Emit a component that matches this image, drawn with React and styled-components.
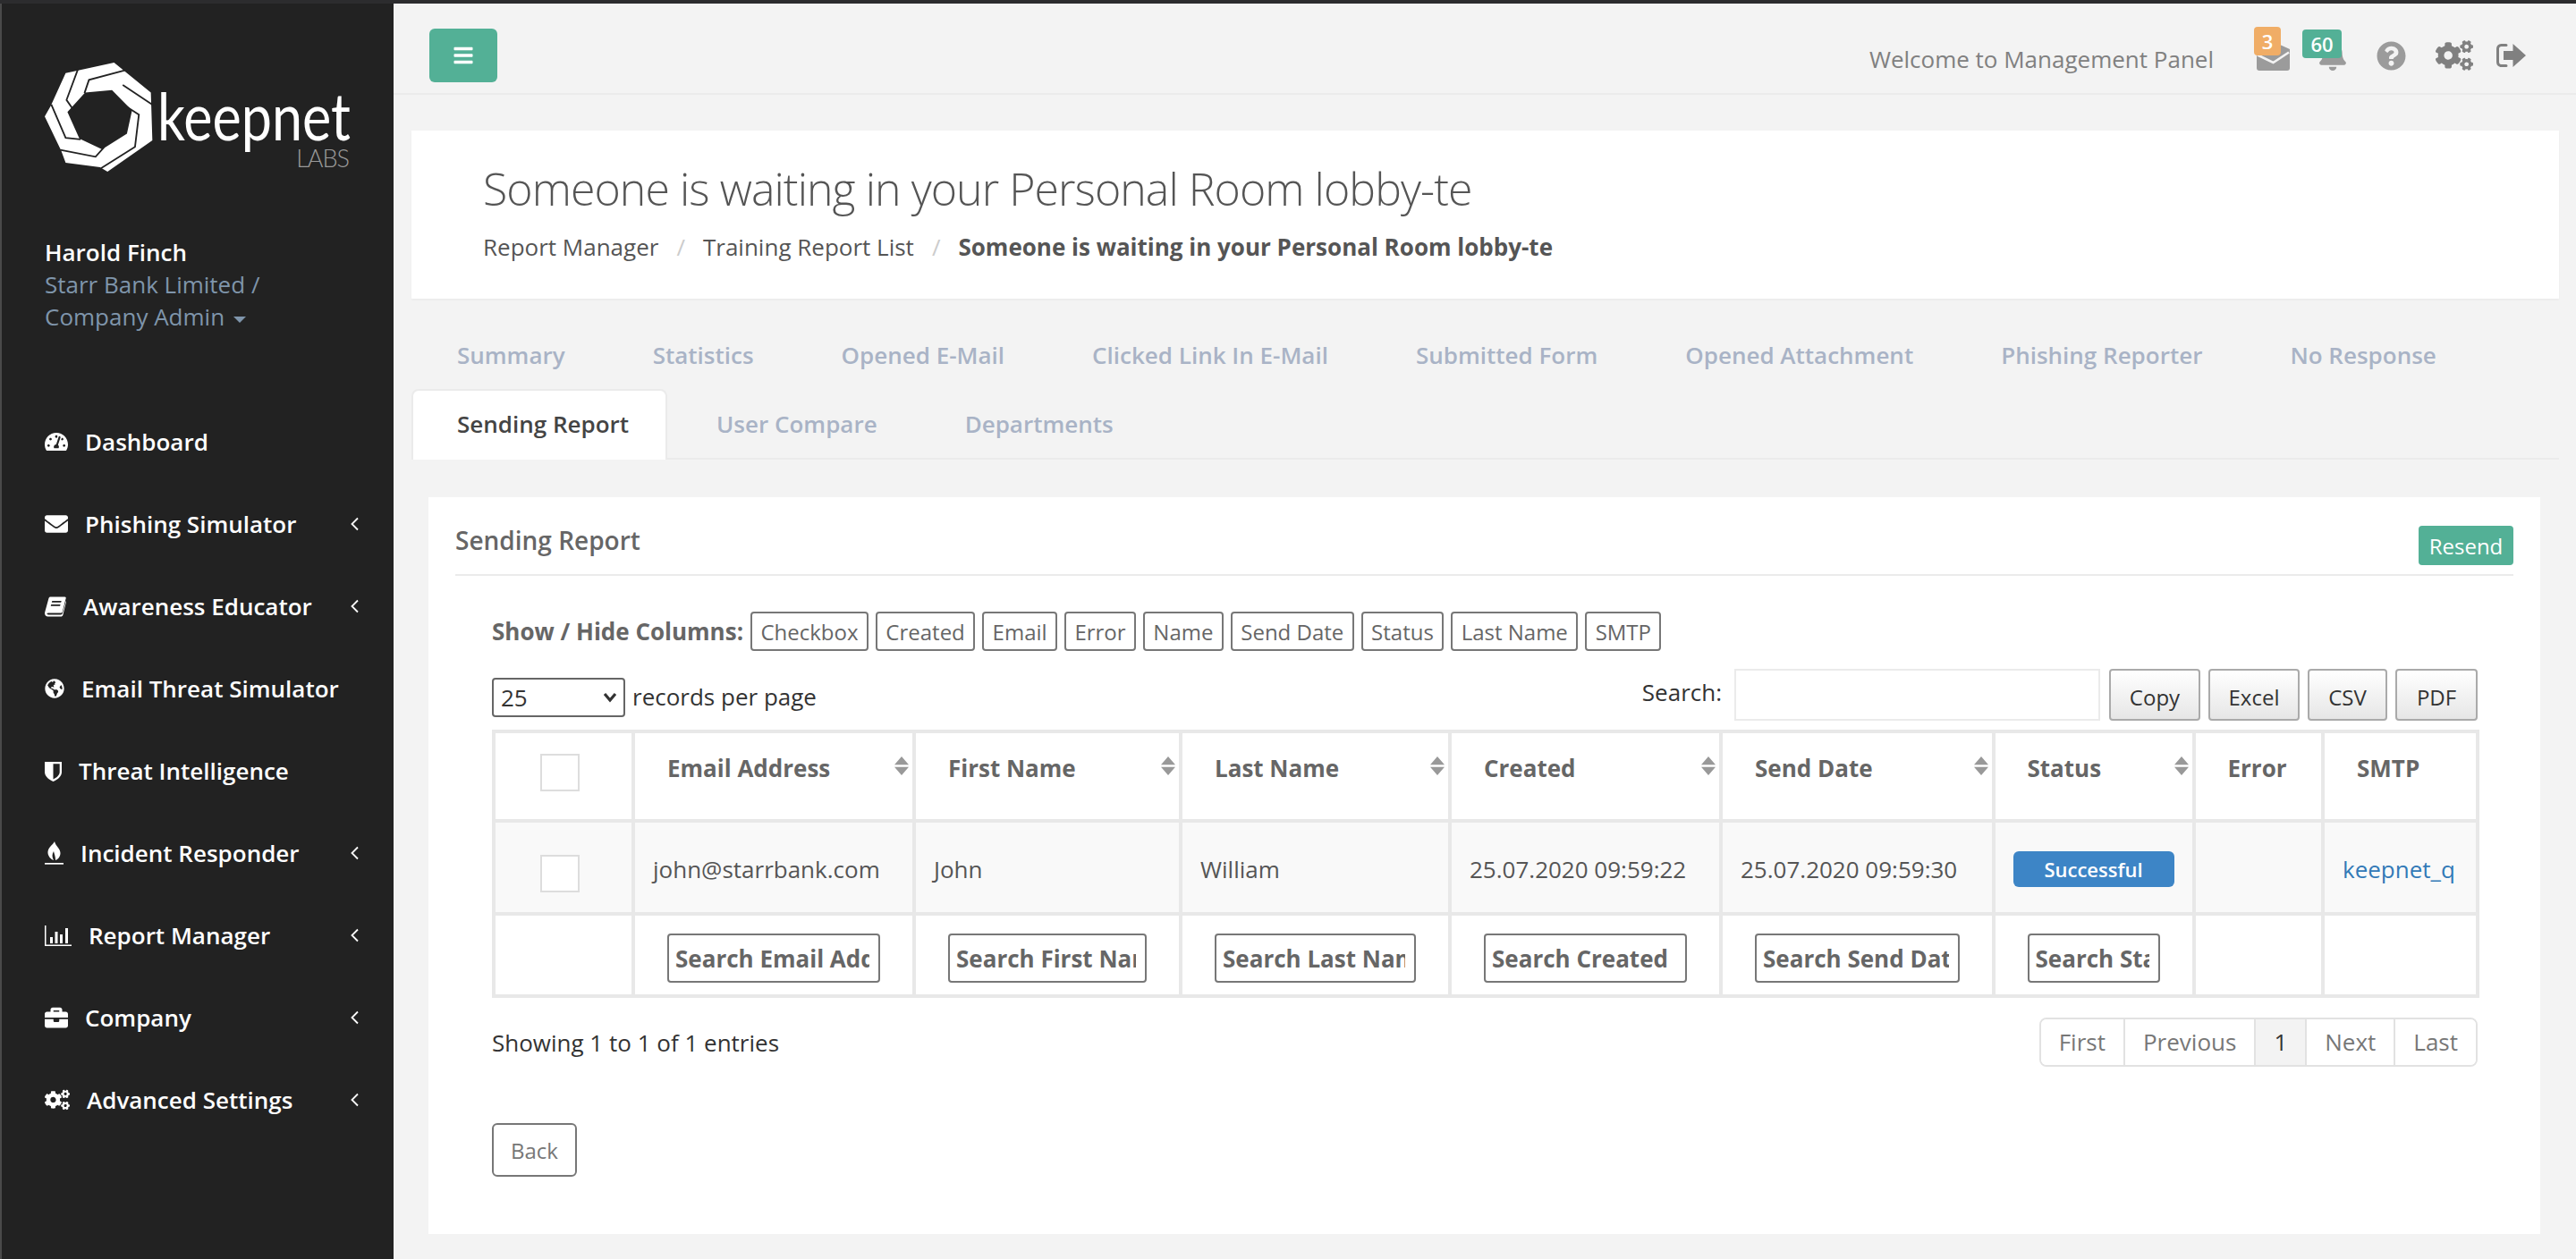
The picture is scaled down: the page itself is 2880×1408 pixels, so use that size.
import React from 'react';
import styled, { createGlobalStyle } from 'styled-components';
import {
  FaTachometerAlt, FaEnvelope, FaGlobeAmericas, FaBriefcase, FaCogs, FaBell, FaQuestionCircle, FaBars,
} from 'react-icons/fa';

const Global = createGlobalStyle`
  html, body { margin: 0; padding: 0; height: 1408px; overflow: hidden; background: #f3f3f3; }
  body { font-family: "Open Sans", "Liberation Sans", sans-serif; font-size: 26px; color: #333; }
  * { box-sizing: border-box; }
`;

const Page = styled.div`
  display: flex;
  height: 1408px;
  border-top: 4px solid #2c2c2e;
`;

const Sidebar = styled.aside`
  width: 440px;
  flex: none;
  background: #222222;
  border-left: 2px solid #4a4a4a;
  padding-top: 66px;
  color: #fff;
`;

const LogoRow = styled.div`
  display: flex;
  padding-left: 48px;
  height: 122px;
`;

const LogoMark = styled.svg`
  width: 122px;
  height: 122px;
  flex: none;
`;

const WordMark = styled.div`
  position: relative;
  width: 214px;
  margin-left: 6px;
`;

const Keepnet = styled.span`
  position: absolute;
  left: -2px;
  top: 28px;
  font-family: Lato, sans-serif;
  font-weight: 400;
  font-size: 74px;
  line-height: 62px;
  color: #fff;
  transform: scaleX(0.825);
  transform-origin: left top;
  white-space: nowrap;
`;

const Labs = styled.span`
  position: absolute;
  right: 2px;
  top: 97px;
  font-family: Lato, sans-serif;
  font-weight: 300;
  font-size: 27px;
  line-height: 20px;
  letter-spacing: -1px;
  color: #9a9a9a;
`;

const UserBlock = styled.div`
  margin-top: 72px;
  padding-left: 48px;
  line-height: 36px;
`;

const UserName = styled.div`
  font-weight: 600;
  color: #fff;
`;

const UserRole = styled.div`
  color: #7f95ab;
  width: 300px;
`;

const Caret = styled.span`
  display: inline-block;
  margin-left: 10px;
  vertical-align: middle;
  border-left: 7px solid transparent;
  border-right: 7px solid transparent;
  border-top: 7px solid #7f95ab;
`;

const Nav = styled.nav`
  margin-top: 76px;
`;

const NavItem = styled.div`
  display: flex;
  align-items: center;
  height: 92px;
  padding: 0 38px 0 48px;
  font-weight: 600;
  color: #fff;
`;

const NavIcon = styled.span`
  display: block;
  flex: none;
  width: ${(p) => p.$w}px;
  margin-right: 19px;
  svg { display: block; width: 100%; height: auto; fill: currentColor; }
`;

const Chevron = styled.svg`
  width: 11px;
  height: 16px;
  margin-left: auto;
`;

const Main = styled.main`
  flex: 1;
  min-width: 0;
`;

const TopBar = styled.header`
  display: flex;
  align-items: center;
  height: 102px;
  padding: 0 56px 0 40px;
  border-bottom: 2px solid #ebebeb;
`;

const MenuButton = styled.button`
  display: flex;
  align-items: center;
  justify-content: center;
  width: 76px;
  height: 60px;
  margin-top: 16px;
  padding: 0;
  border: 0;
  border-radius: 6px;
  background: #53b096;
  color: #fff;
  svg { width: 24px; height: 24px; }
`;

const Welcome = styled.span`
  margin-left: auto;
  margin-top: 24px;
  color: #808080;
`;

const TopIcon = styled.span`
  position: relative;
  display: block;
  flex: none;
  width: ${(p) => p.$w}px;
  margin-left: ${(p) => p.$ml}px;
  margin-top: ${(p) => p.$mt}px;
  color: ${(p) => p.$c};
  svg { display: block; width: 100%; height: auto; fill: currentColor; }
`;

const Badge = styled.span`
  position: absolute;
  left: ${(p) => p.$l}px;
  top: ${(p) => p.$t}px;
  width: ${(p) => p.$w}px;
  height: 32px;
  border-radius: 4px;
  background: ${(p) => p.$bg};
  color: #fff;
  font-size: 22px;
  font-weight: 600;
  line-height: 32px;
  text-align: center;
`;

const PageHead = styled.section`
  height: 188px;
  margin: 40px 19px 0 20px;
  padding: 29px 0 0 80px;
  background: #fff;
  box-shadow: 0 2px 2px rgba(0, 0, 0, 0.03);
`;

const Title = styled.h1`
  margin: 0;
  font-size: 50px;
  font-weight: 300;
  letter-spacing: -0.94px;
  line-height: 72px;
  color: #555;
`;

const Crumbs = styled.div`
  display: flex;
  margin-top: 11px;
  line-height: 36px;
  color: #555;
`;

const CrumbSep = styled.span`
  margin: 0 20px;
  color: #ccc;
`;

const CrumbCurrent = styled.strong`
  font-weight: 700;
  color: #555;
`;

const TabsBar = styled.div`
  display: flex;
  flex-wrap: wrap;
  margin: 24px 19px 0 20px;
  border-bottom: 2px solid #ebebeb;
`;

const Tab = styled.div`
  height: ${(p) => (p.$active ? 79 : 77)}px;
  margin: 0 4px ${(p) => (p.$active ? -2 : 0)}px 0;
  padding: 0 41px 0 49px;
  border: 2px solid ${(p) => (p.$active ? '#ebebeb' : 'transparent')};
  border-bottom: 0;
  border-radius: 8px 8px 0 0;
  background: ${(p) => (p.$active ? '#fff' : 'transparent')};
  color: ${(p) => (p.$active ? '#444' : '#a9b3c6')};
  font-weight: 600;
  line-height: 74px;
`;

const Portlet = styled.section`
  height: 824px;
  margin: 42px 40px 0 39px;
  padding: 0 30px;
  background: #fff;
`;

const PortletHead = styled.div`
  display: flex;
  align-items: flex-end;
  justify-content: space-between;
  height: 88px;
  padding-bottom: 10px;
  border-bottom: 2px solid #ebebeb;
`;

const PortletTitle = styled.h2`
  margin: 0 0 8px;
  font-size: 28px;
  font-weight: 600;
  line-height: 40px;
  color: #666;
`;

const ResendButton = styled.button`
  width: 106px;
  height: 44px;
  padding: 0;
  border: 0;
  border-radius: 4px;
  background: #53b096;
  color: #fff;
  font: 400 24px "Open Sans", sans-serif;
`;

const PortletBody = styled.div`
  padding: 40px 40px 0 41px;
`;

const ColumnToggles = styled.div`
  display: flex;
  align-items: center;
  gap: 8px;
  height: 44px;
`;

const ToggleLabel = styled.span`
  font-weight: 700;
  color: #666;
`;

const ToggleButton = styled.button`
  height: 44px;
  padding: 0 9.4px;
  border: 2px solid #777;
  border-radius: 4px;
  background: #fff;
  color: #666;
  font: 400 24px "Open Sans", sans-serif;
`;

const Controls = styled.div`
  display: flex;
  align-items: center;
  height: 58px;
  margin-top: 20px;
`;

const PageSize = styled.select`
  appearance: none;
  width: 149px;
  height: 44px;
  margin-top: 6px;
  padding: 0 6px 0 8px;
  border: 2px solid #666;
  border-radius: 4px;
  background: #fff url("data:image/svg+xml,%3Csvg xmlns='http://www.w3.org/2000/svg' width='16' height='12'%3E%3Cpath d='M2 2l6 7 6-7' fill='none' stroke='%23333' stroke-width='3.2'/%3E%3C/svg%3E") no-repeat right 7px center;
  color: #333;
  font: 400 26px "Open Sans", sans-serif;
`;

const PerPage = styled.span`
  margin: 4px 0 0 8px;
`;

const SearchLabel = styled.label`
  margin: 0 14px 6px auto;
`;

const SearchInput = styled.input`
  width: 409px;
  height: 58px;
  border: 2px solid #ebebeb;
  background: #fff;
`;

const ExportButton = styled.button`
  width: ${(p) => p.$w}px;
  height: 58px;
  margin-left: ${(p) => p.$ml}px;
  padding: 4px 0 0;
  border: 2px solid #aaa;
  border-radius: 4px;
  background: linear-gradient(#fff, #e6e6e6);
  color: #333;
  font: 400 24px "Open Sans", sans-serif;
`;

const Table = styled.table`
  width: 2220px;
  margin-top: 10px;
  border-collapse: collapse;
  table-layout: fixed;
`;

const Col = styled.col`
  width: ${(p) => p.$w}px;
`;

const Th = styled.th`
  position: relative;
  height: 100px;
  padding: 21px 36px 0;
  border: 4px solid #e8e8e8;
  color: #666;
  font-size: 26px;
  font-weight: 700;
  line-height: 36px;
  text-align: left;
  vertical-align: top;
`;

const SortMark = styled.svg`
  position: absolute;
  right: 4px;
  top: 26px;
  width: 16px;
  height: 21px;
  fill: #999;
`;

const Checkbox = styled.input`
  appearance: none;
  display: block;
  width: 44px;
  height: 42px;
  margin: 0;
  border: 2px solid #ddd;
  background: #fff;
`;

const CheckHead = styled(Th)`
  padding: 23px 0 0 50px;
`;

const Td = styled.td`
  height: 104px;
  padding: 4px 20px 0;
  border: 4px solid #e8e8e8;
  background: #f9f9f9;
  color: #555;
  white-space: nowrap;
  overflow: hidden;
`;

const CheckCell = styled(Td)`
  padding: 36px 0 0 50px;
  vertical-align: top;
`;

const StatusBadge = styled.span`
  display: block;
  width: 180px;
  height: 40px;
  border-radius: 6px;
  background: #3d85c6;
  color: #fff;
  font-size: 22px;
  font-weight: 600;
  line-height: 40px;
  text-align: center;
`;

const SmtpLink = styled.a`
  color: #337ab7;
`;

const FilterCell = styled.td`
  height: 92px;
  padding: 20px 36px 0;
  border: 4px solid #e8e8e8;
  vertical-align: top;
`;

const FilterInput = styled.input`
  display: block;
  width: 100%;
  height: 55px;
  padding: 0 10px 0 7px;
  border: 2px solid #777;
  border-radius: 4px;
  background: #fff;
  color: #666;
  font: 700 26px "Open Sans", sans-serif;
  &::placeholder { color: #666; opacity: 1; }
`;

const TableFooter = styled.div`
  display: flex;
  align-items: center;
  justify-content: space-between;
  margin-top: 22px;
`;

const Pager = styled.div`
  display: flex;
  height: 55px;
  border: 2px solid #e2e2e2;
  border-radius: 8px;
  overflow: hidden;
`;

const PagerItem = styled.span`
  padding: 0 20px;
  border-left: ${(p) => (p.$first ? 0 : 2)}px solid #e2e2e2;
  background: ${(p) => (p.$active ? '#f3f3f3' : '#fff')};
  color: ${(p) => (p.$active ? '#333' : '#777')};
  line-height: 50px;
`;

const BackButton = styled.button`
  display: block;
  width: 95px;
  height: 60px;
  margin-top: 63px;
  padding: 0;
  border: 2px solid #777;
  border-radius: 6px;
  background: #fff;
  color: #777;
  font: 400 24px "Open Sans", sans-serif;
`;

const BookIcon = () => (
  <svg viewBox="0 0 24 23">
    <path d="M6.5 0.5H22.5c1 0 1.4.8 1.2 1.6L19.8 17c-.3 1-1 1.6-2 1.6H4c-1.3 0-1.8 1-1.3 1.5.4.3 1 .3 1.5.3H18c1 0 1.5-.5 1.8-1.3l4-14.4.2 1.6-3.6 14.4c-.3 1.2-1.3 1.8-2.4 1.8H3.5C1.5 22.5 0 20.8 0 19c0-.6.1-1.2.3-1.8L4.4 2.2C4.7 1.2 5.5.5 6.5.5z" />
    <path d="M8.3 5h10.4l-.5 1.8H7.8zM7.2 9h10.4l-.5 1.8H6.7z" fill="#222" />
  </svg>
);

const ShieldIcon = () => (
  <svg viewBox="0 0 19 23">
    <path d="M0 1h19v11.5c0 5-5.2 8.6-9.5 10.5C5.2 21.100 0 17.500 0 12.500z" />
    <path d="M9.500 3.200h7.200v9.300c0 3.500-3.800 6.300-7.200 8z" fill="#222" />
  </svg>
);

const FlameIcon = () => (
  <svg viewBox="0 0 21 26">
    <path d="M11 0C9 4 3 7 3.500 13 4 17 7 20 10 21 8 18 8 14 10 11c1 4 2 6 2 10 3-1 5.500-4 5.500-8C17.500 8 12 5 11 0z" />
    <rect x="0" y="24" width="21" height="1.700" />
  </svg>
);

const ChartIcon = () => (
  <svg viewBox="0 0 30 23">
    <path d="M0 0h1.500v21.400H30V23H0z" />
    <rect x="6" y="13" width="3" height="7" />
    <rect x="11.500" y="7" width="3" height="13" />
    <rect x="17" y="10" width="3" height="10" />
    <rect x="23" y="3" width="3" height="17" />
  </svg>
);

const MailIcon = () => (
  <svg viewBox="0 0 37 29">
    <path d="M3 0H26L37 5V26a3 3 0 0 1-3 3H3a3 3 0 0 1-3-3V3a3 3 0 0 1 3-3z" />
    <path d="M1 11.500L18.500 20 36 8.500" fill="none" stroke="#f3f3f3" strokeWidth="2.600" />
  </svg>
);

const SignOutIcon = () => (
  <svg viewBox="0 0 34 28">
    <path d="M12 2.500H6.500a4 4 0 0 0-4 4v15a4 4 0 0 0 4 4H12" fill="none" stroke="currentColor" strokeWidth="3" strokeLinecap="round" />
    <path d="M9 9h10.500V1L34 14 19.500 27v-8H9z" />
  </svg>
);

const Logo = () => (
  <LogoMark viewBox="30 30 365 365">
    <path
      fillRule="evenodd"
      fill="#fff"
      d="M100 65L135 58 262 30 385 130 390 290 240 395 215 380 100 365 85 325 30 210 50 175z
         M165 130L255 122 322 190 305 268 222 320 146 284 106 195z"
    />
    <g fill="none" stroke="#222" strokeWidth="5.500">
      <path d="M142 50L103 155 132 197" />
      <path d="M298 56L178 88 163 132" />
      <path d="M291 105L392 172" />
      <path d="M52 170L100 282 150 287" />
      <path d="M82 322L200 345 228 314" />
      <path d="M218 384L332 312 345 204 300 175" />
    </g>
  </LogoMark>
);

const ChevronLeft = () => (
  <Chevron viewBox="0 0 11 16">
    <polyline points="9,1.500 2.500,8 9,14.500" fill="none" stroke="#fff" strokeWidth="1.800" />
  </Chevron>
);

const SortIcon = () => (
  <SortMark viewBox="0 0 16 21">
    <path d="M8 0L16 9.300H0zM8 21L0 11.700h16z" />
  </SortMark>
);

const navItems = [
  { label: 'Dashboard', icon: <FaTachometerAlt />, w: 26 },
  { label: 'Phishing Simulator', icon: <FaEnvelope />, w: 26, sub: true },
  { label: 'Awareness Educator', icon: <BookIcon />, w: 24, sub: true },
  { label: 'Email Threat Simulator', icon: <FaGlobeAmericas />, w: 22 },
  { label: 'Threat Intelligence', icon: <ShieldIcon />, w: 19 },
  { label: 'Incident Responder', icon: <FlameIcon />, w: 21, sub: true },
  { label: 'Report Manager', icon: <ChartIcon />, w: 30, sub: true },
  { label: 'Company', icon: <FaBriefcase />, w: 26, sub: true },
  { label: 'Advanced Settings', icon: <FaCogs />, w: 28, sub: true },
];

const tabs = ['Summary', 'Statistics', 'Opened E-Mail', 'Clicked Link In E-Mail', 'Submitted Form', 'Opened Attachment', 'Phishing Reporter', 'No Response', 'Sending Report', 'User Compare', 'Departments'];
const toggles = ['Checkbox', 'Created', 'Email', 'Error', 'Name', 'Send Date', 'Status', 'Last Name', 'SMTP'];
const exportsList = [['Copy', 102, 10], ['Excel', 102, 9], ['CSV', 89, 9], ['PDF', 92, 9]];
const colWidths = [156, 314, 298, 301, 303, 304.5, 224, 144.5, 173];
const columns = [
  ['Email Address', true], ['First Name', true], ['Last Name', true], ['Created', true], ['Send Date', true], ['Status', true], ['Error', false], ['SMTP', false],
];
const filters = ['Search Email Address', 'Search First Name', 'Search Last Name', 'Search Created', 'Search Send Date', 'Search Status'];
const pagerItems = ['First', 'Previous', '1', 'Next', 'Last'];

export default function App() {
  return (
    <Page>
      <Global />
      <Sidebar>
        <LogoRow>
          <Logo />
          <WordMark>
            <Keepnet>keepnet</Keepnet>
            <Labs>LABS</Labs>
          </WordMark>
        </LogoRow>
        <UserBlock>
          <UserName>Harold Finch</UserName>
          <UserRole>Starr Bank Limited / Company Admin<Caret /></UserRole>
        </UserBlock>
        <Nav>
          {navItems.map((n) => (
            <NavItem key={n.label}>
              <NavIcon $w={n.w}>{n.icon}</NavIcon>
              {n.label}
              {n.sub && <ChevronLeft />}
            </NavItem>
          ))}
        </Nav>
      </Sidebar>
      <Main>
        <TopBar>
          <MenuButton><FaBars /></MenuButton>
          <Welcome>Welcome to Management Panel</Welcome>
          <TopIcon $w={37} $ml={48} $mt={21} $c="#9b9b9b">
            <MailIcon />
            <Badge $l={-3} $t={-20} $w={30} $bg="#f0ad66">3</Badge>
          </TopIcon>
          <TopIcon $w={34} $ml={31} $mt={15} $c="#9b9b9b">
            <FaBell />
            <Badge $l={-17} $t={-12} $w={44} $bg="#53b096">60</Badge>
          </TopIcon>
          <TopIcon $w={33} $ml={32} $mt={16} $c="#9b9b9b"><FaQuestionCircle /></TopIcon>
          <TopIcon $w={42} $ml={33} $mt={16} $c="#808080"><FaCogs /></TopIcon>
          <TopIcon $w={34} $ml={25} $mt={16} $c="#808080"><SignOutIcon /></TopIcon>
        </TopBar>
        <PageHead>
          <Title>Someone is waiting in your Personal Room lobby-te</Title>
          <Crumbs>
            Report Manager<CrumbSep>/</CrumbSep>Training Report List<CrumbSep>/</CrumbSep>
            <CrumbCurrent>Someone is waiting in your Personal Room lobby-te</CrumbCurrent>
          </Crumbs>
        </PageHead>
        <TabsBar>
          {tabs.map((t) => <Tab key={t} $active={t === 'Sending Report'}>{t}</Tab>)}
        </TabsBar>
        <Portlet>
          <PortletHead>
            <PortletTitle>Sending Report</PortletTitle>
            <ResendButton>Resend</ResendButton>
          </PortletHead>
          <PortletBody>
            <ColumnToggles>
              <ToggleLabel>Show / Hide Columns:</ToggleLabel>
              {toggles.map((t) => <ToggleButton key={t}>{t}</ToggleButton>)}
            </ColumnToggles>
            <Controls>
              <PageSize defaultValue="25">
                <option>10</option>
                <option>25</option>
                <option>50</option>
              </PageSize>
              <PerPage>records per page</PerPage>
              <SearchLabel>Search:</SearchLabel>
              <SearchInput />
              {exportsList.map(([t, w, ml]) => <ExportButton key={t} $w={w} $ml={ml}>{t}</ExportButton>)}
            </Controls>
            <Table>
              <colgroup>
                {colWidths.map((w, i) => <Col key={i} $w={w} />)}
              </colgroup>
              <thead>
                <tr>
                  <CheckHead><Checkbox type="checkbox" /></CheckHead>
                  {columns.map(([c, s]) => <Th key={c}>{c}{s && <SortIcon />}</Th>)}
                </tr>
              </thead>
              <tbody>
                <tr>
                  <CheckCell><Checkbox type="checkbox" /></CheckCell>
                  <Td>john@starrbank.com</Td>
                  <Td>John</Td>
                  <Td>William</Td>
                  <Td>25.07.2020 09:59:22</Td>
                  <Td>25.07.2020 09:59:30</Td>
                  <Td><StatusBadge>Successful</StatusBadge></Td>
                  <Td />
                  <Td><SmtpLink>keepnet_q</SmtpLink></Td>
                </tr>
                <tr>
                  <FilterCell />
                  {filters.map((f) => <FilterCell key={f}><FilterInput placeholder={f} /></FilterCell>)}
                  <FilterCell />
                  <FilterCell />
                </tr>
              </tbody>
            </Table>
            <TableFooter>
              <span>Showing 1 to 1 of 1 entries</span>
              <Pager>
                {pagerItems.map((p, i) => <PagerItem key={p} $first={i === 0} $active={p === '1'}>{p}</PagerItem>)}
              </Pager>
            </TableFooter>
            <BackButton>Back</BackButton>
          </PortletBody>
        </Portlet>
      </Main>
    </Page>
  );
}
